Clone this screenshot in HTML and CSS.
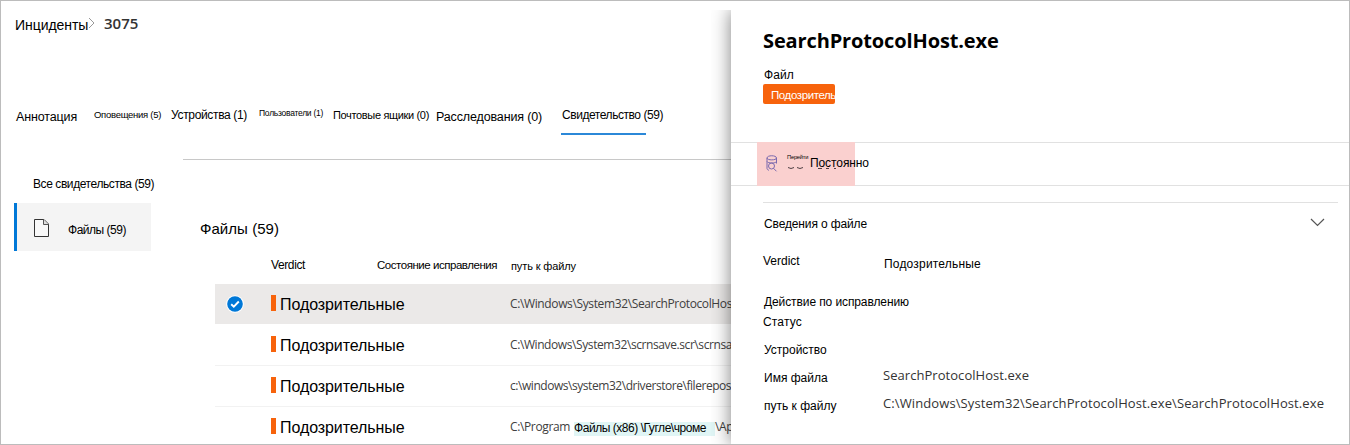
FILE: index.html
```html
<!DOCTYPE html>
<html lang="ru">
<head>
<meta charset="utf-8">
<title>Инциденты 3075</title>
<link rel="stylesheet" href="styles.css">
</head>
<body>
<div class="frame">
  <main class="incident">
    <nav class="breadcrumb">
      <span class="crumb">Инциденты</span>
      <svg class="crumb-arrow" width="7" height="12" viewBox="0 0 7 12"><path d="M1 1l5 5-5 5" fill="none" stroke="#999"/></svg>
      <span class="crumb-id">3075</span>
    </nav>
    <nav class="tabs">
      <span class="tab tab-summary">Аннотация</span>
      <span class="tab tab-alerts">Оповещения (5)</span>
      <span class="tab tab-devices">Устройства (1)</span>
      <span class="tab tab-users">Пользователи (1)</span>
      <span class="tab tab-mail">Почтовые ящики (0)</span>
      <span class="tab tab-invest">Расследования (0)</span>
      <span class="tab tab-evidence">Свидетельство (59)</span>
    </nav>
    <div class="content">
      <aside class="sidebar">
        <div class="side-all">Все свидетельства (59)</div>
        <div class="side-item">
          <svg width="16" height="20" viewBox="0 0 16 20"><path d="M.5 1.500h9.500l4.500 4.500v12.500H.5z" fill="#f8f8f8" stroke="#333"/><path d="M9.500 1.500v5h5" fill="#ddd" stroke="#555"/></svg>
          <span>Файлы (59)</span>
        </div>
      </aside>
      <section class="evidence">
        <h2>Файлы (59)</h2>
        <div class="table">
          <div class="thead">
            <span class="th-verdict">Verdict</span>
            <span class="th-state">Состояние исправления</span>
            <span class="th-path">путь к файлу</span>
          </div>
          <div class="row selected">
            <svg class="check" width="18" height="18" viewBox="0 0 18 18"><circle cx="9" cy="9" r="8.800" fill="#fff"/><circle cx="9" cy="9" r="7.800" fill="#0078d7"/><path d="M5.200 9.200l2.600 2.500 5-5.200" fill="none" stroke="#fff" stroke-width="1.900"/></svg>
            <span class="bar"></span><span class="verdict">Подозрительные</span>
            <span class="path">C:\Windows\System32\SearchProtocolHos</span>
          </div>
          <div class="row"><span class="check"></span><span class="bar"></span><span class="verdict">Подозрительные</span>
            <span class="path p2">C:\Windows\System32\scrnsave.scr\scrnsa</span></div>
          <div class="row"><span class="check"></span><span class="bar"></span><span class="verdict">Подозрительные</span>
            <span class="path p3">c:\windows\system32\driverstore\filerepos</span></div>
          <div class="row"><span class="check"></span><span class="bar"></span><span class="verdict">Подозрительные</span>
            <span class="path p4"><span class="p4-start">C:\Program</span><mark>Файлы (x86) \Гугле\чроме</mark>\Ap</span></div>
        </div>
      </section>
    </div>
  </main>
  <aside class="panel">
    <h1>SearchProtocolHost.exe</h1>
    <div class="kind">Файл</div>
    <div class="badge">Подозритель</div>
    <div class="actions">
      <div class="hunt">
        <svg width="12" height="17" viewBox="0 0 12 17" fill="none" stroke="#7a69ae"><path d="M1 3c0-3 9.500-3 9.500 0v5.500M1 3v10.500c0 1 1 1.500 2 1.800M1 3c0 2.500 9.500 2.500 9.500 0M1 6.500c1 2 8.500 2 9.500 0"/><circle cx="5.500" cy="11" r="3"/><path d="M7.500 13.300l3 3"/></svg>
        <span class="go">Перейти</span>
        <span class="constant">Постоянно</span>
        <svg class="remnant" width="54" height="3" viewBox="0 0 54 3" fill="none" stroke="#514044"><path d="M1 .5q3 2 6 0M10 .5q3 2 6 0M31 1.500h4M39 1.500h3M47 1.500h2"/></svg>
      </div>
    </div>
    <section class="details">
      <div class="details-head"><span>Сведения о файле</span>
        <svg width="15" height="9" viewBox="0 0 15 9"><path d="M1 1l6.500 6.500L14 1" fill="none" stroke="#555" stroke-width="1.200"/></svg></div>
      <dl>
        <div class="f f-verdict"><dt>Verdict</dt><dd class="dd-verdict">Подозрительные</dd></div>
        <div class="f f-action"><dt>Действие по исправлению</dt></div>
        <div class="f f-status"><dt>Статус</dt></div>
        <div class="f f-device"><dt>Устройство</dt></div>
        <div class="f f-name"><dt>Имя файла</dt><dd>SearchProtocolHost.exe</dd></div>
        <div class="f f-path"><dt>путь к файлу</dt><dd class="long">C:\Windows\System32\SearchProtocolHost.exe\SearchProtocolHost.exe</dd></div>
      </dl>
    </section>
  </aside>
</div>
</body>
</html>
```
FILE: styles.css
```css
* { box-sizing: border-box; }
body { margin: 0; font-family: "Liberation Sans", Arial, sans-serif; font-size: 12px; line-height: 20px; color: #000; background: #fff; }
h1, h2, dl, dd { margin: 0; }
svg { display: block; flex: none; }
.frame { position: relative; width: 1350px; height: 445px; border: 1px solid #bcbcbc; overflow: hidden; white-space: nowrap; }
.incident { width: 730px; height: 443px; overflow: hidden; }
.breadcrumb { display: flex; height: 40px; padding: 14px 0 0 14px; }
.crumb { width: 73px; font-size: 14px; letter-spacing: -.05px; }
.crumb-arrow { margin-top: 2px; }
.crumb-id { margin-left: 9px; margin-top: -2px; font: 600 15px/20px "Open Sans", sans-serif; color: #333; }
.tabs { display: flex; height: 94px; padding: 60px 0 0 15px; }
.tab { flex: none; height: 34px; }
.tab-summary { width: 78px; padding-top: 6px; font-size: 12.5px; letter-spacing: -.14px; }
.tab-alerts { width: 77px; padding-top: 4px; font-size: 9.5px; letter-spacing: -.28px; }
.tab-devices { width: 88px; padding-top: 4px; letter-spacing: -.34px; }
.tab-users { width: 74px; padding-top: 2px; font-size: 8.500px; letter-spacing: -.26px; }
.tab-mail { width: 103px; padding-top: 4px; font-size: 11px; letter-spacing: -.34px; }
.tab-invest { width: 125px; padding-top: 6px; font-size: 12.5px; letter-spacing: -.14px; }
.tab-evidence { width: 85px; padding: 4px 0 0 1px; border-bottom: 2px solid #2b88d8; letter-spacing: -.44px; }
.content { display: flex; }
.sidebar { width: 182px; padding: 39px 0 0 13px; }
.side-all { padding-left: 19px; letter-spacing: -.42px; }
.side-item { display: flex; width: 137px; height: 48px; margin-top: 9px; padding: 15px 0 0 17px; border-left: 3px solid #0078d7; background: #f4f4f4; }
.side-item span { margin: 2px 0 0 18px; letter-spacing: -.48px; }
.evidence { width: 548px; margin-top: 24px; border-top: 1px solid #c8c8c8; padding: 59px 0 0 17px; }
h2 { font-size: 15px; font-weight: 400; letter-spacing: .05px; }
.table { margin-left: 15px; }
.thead { display: flex; padding: 16px 0 8px 56px; }
.th-verdict { width: 106px; letter-spacing: -.38px; }
.th-state { width: 134px; font-size: 11.5px; letter-spacing: -.46px; }
.th-path { margin-top: 1px; font-size: 11px; letter-spacing: -.12px; }
.row { display: flex; height: 41px; padding-top: 11px; border-bottom: 1px solid #f2f2f2; }
.selected { height: 40px; background: #ebe9e8; border: 0; }
.selected + .row { height: 42px; padding-top: 12px; }
.check { flex: none; width: 18px; margin: 0 26px 0 11px; }
.bar { flex: none; width: 5px; height: 16px; margin: 0 0 0 1px; background: #f7630c; }
.verdict { flex: none; width: 234px; padding-left: 4px; font-size: 16px; line-height: 20px; letter-spacing: -.08px; }
.path { flex: none; font: 12px/17px "Open Sans", "Noto Sans", sans-serif; letter-spacing: -.37px; color: #404040; }
.p2 { letter-spacing: -.41px; }
.p3 { letter-spacing: -.45px; }
.p4 { display: flex; }
.p4-start { width: 60px; }
mark { width: 141px; height: 14px; margin: 4px 0 0 4px; font: 12px/13px "Liberation Sans", sans-serif; letter-spacing: -.45px; background: #e0f5f5; color: #000; }
.panel { position: absolute; left: 730px; top: 9px; width: 618px; height: 434px; background: #fff; box-shadow: 0 0 18px rgba(0,0,0,.5); clip-path: inset(0 0 0 -20px); }
h1 { padding: 17px 0 0 32px; font: bold 20px/28px "Open Sans", sans-serif; letter-spacing: -.13px; }
.kind { padding: 10px 0 0 33px; letter-spacing: .1px; }
.badge { width: 72px; height: 20px; margin: -1px 0 0 32px; padding: 1px 0 0 8px; overflow: hidden; border-radius: 2px; background: #f7630c; color: #fff; font-size: 11.5px; letter-spacing: -.4px; }
.actions { height: 44px; margin-top: 38px; padding-left: 26px; border: solid #e1e1e1; border-width: 1px 0; }
.hunt { position: relative; display: flex; width: 98px; height: 44px; margin-top: -1px; padding: 13px 0 0 9px; background: #fad0cf; }
.go { flex: none; width: 23px; margin-left: 9px; font-size: 5.7px; line-height: 5px; letter-spacing: -.18px; }
.constant { line-height: 16px; letter-spacing: -.09px; }
.remnant { position: absolute; left: 30px; top: 25px; }
.details { margin: 16px 11px 0 32px; border-top: 1px solid #e1e1e1; }
.details-head { display: flex; justify-content: space-between; padding: 11px 13px 0 1px; letter-spacing: -.13px; }
.details-head svg { margin-top: 4px; }
.f { display: flex; }
dt { width: 120px; }
dd { font: 13px/20px "Open Sans", "Noto Sans", sans-serif; color: #333; }
.f-verdict { padding-top: 17px; }
.dd-verdict { margin: 3px 0 0 1px; font: 12px/20px "Liberation Sans", sans-serif; letter-spacing: .19px; color: #000; }
.f-action { padding: 18px 0 0 1px; letter-spacing: -.1px; }
.f-status { letter-spacing: .17px; }
.f-device, .f-name, .f-path { padding: 8px 0 0 1px; }
.f-name dd, .f-path dd { margin: -3px 0 0 -1px; height: 20px; }
.f-name dd { letter-spacing: .05px; }
dd.long { letter-spacing: .1px; }
```
